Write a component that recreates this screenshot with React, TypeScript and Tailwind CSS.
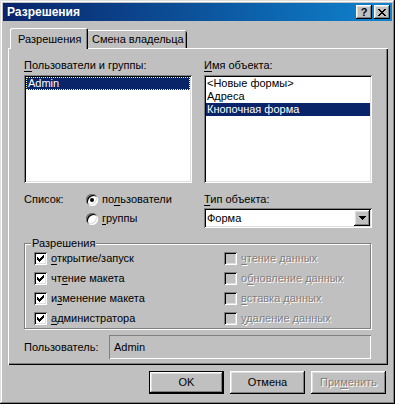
import React from 'react';

const raised =
  'shadow-[inset_-1px_-1px_#000,inset_1px_1px_#fff,inset_-2px_-2px_#808080,inset_2px_2px_#dfdfdf]';
const sunken =
  'shadow-[inset_1px_1px_#808080,inset_-1px_-1px_#fff,inset_2px_2px_#000,inset_-2px_-2px_#dfdfdf]';

const U = ({ children }: { children: React.ReactNode }) => (
  <span className="underline underline-offset-[2px] decoration-1">{children}</span>
);

const Check = ({ checked, disabled }: { checked?: boolean; disabled?: boolean }) => (
  <div
    className={`w-[13px] h-[13px] shrink-0 flex items-center justify-center ${sunken} ${
      disabled ? 'bg-[#c0c0c0]' : 'bg-white'
    }`}
  >
    {checked && (
      <svg width="7" height="7" viewBox="0 0 7 7" shapeRendering="crispEdges" fill="#000">
        <rect x="6" y="0" width="1" height="1" />
        <rect x="5" y="1" width="2" height="1" />
        <rect x="0" y="2" width="1" height="1" />
        <rect x="4" y="2" width="3" height="1" />
        <rect x="0" y="3" width="2" height="1" />
        <rect x="3" y="3" width="3" height="1" />
        <rect x="0" y="4" width="5" height="1" />
        <rect x="1" y="5" width="3" height="1" />
        <rect x="2" y="6" width="1" height="1" />
      </svg>
    )}
  </div>
);

const Radio = ({ checked }: { checked?: boolean }) => (
  <div className="w-[12px] h-[12px] shrink-0 rounded-full bg-white flex items-center justify-center shadow-[inset_1px_1px_#808080,inset_-1px_-1px_#fff,inset_2px_2px_#000,inset_-2px_-2px_#dfdfdf]">
    {checked && <div className="w-[4px] h-[4px] rounded-full bg-black" />}
  </div>
);

const CheckRow = ({
  checked,
  disabled,
  children,
}: {
  checked?: boolean;
  disabled?: boolean;
  children: React.ReactNode;
}) => (
  <div className="h-[20px] flex items-center gap-[4px]">
    <Check checked={checked} disabled={disabled} />
    <span className={disabled ? 'text-[#808080] [text-shadow:1px_1px_#fff]' : ''}>{children}</span>
  </div>
);

const Button = ({
  children,
  isDefault,
  disabled,
}: {
  children: React.ReactNode;
  isDefault?: boolean;
  disabled?: boolean;
}) => (
  <div className={`w-[75px] h-[23px] ${isDefault ? 'border border-black' : ''}`}>
    <div
      className={`w-full h-full flex items-center justify-center bg-[#c0c0c0] ${raised} ${
        disabled ? 'text-[#808080] [text-shadow:1px_1px_#fff]' : ''
      }`}
    >
      {children}
    </div>
  </div>
);

export default function App() {
  return (
    <div className="w-[395px] h-[404px] bg-[#c0c0c0] p-[3px] text-[11px] leading-[13px] text-black font-['Liberation_Sans',Arial,sans-serif] shadow-[inset_-1px_-1px_#000,inset_1px_1px_#dfdfdf,inset_-2px_-2px_#808080,inset_2px_2px_#fff]">
      {/* Title bar */}
      <div className="h-[18px] flex items-center pl-[4px] pr-[2px] bg-gradient-to-r from-[#0a246a] to-[#1084d0]">
        <span className="flex-1 text-white font-bold text-[12px]">Разрешения</span>
        <div className={`w-[16px] h-[14px] bg-[#c0c0c0] flex items-center justify-center font-bold text-[11px] ${raised}`}>
          ?
        </div>
        <div className={`ml-[2px] w-[16px] h-[14px] bg-[#c0c0c0] flex items-center justify-center ${raised}`}>
          <svg width="8" height="7" viewBox="0 0 8 7" shapeRendering="crispEdges">
            <path
              d="M0 0h2v1h1v1h2v-1h1v-1h2v1h-1v1h-1v1h-1v1h1v1h1v1h1v1h-2v-1h-1v-1h-2v1h-1v1h-2v-1h1v-1h1v-1h1v-1h-1v-1h-1v-1h-1z"
              fill="#000"
            />
          </svg>
        </div>
      </div>

      <div className="px-[5px] pt-[7px]">
        {/* Tabs */}
        <div className="flex items-end h-[20px] pl-[2px]">
          <div className="relative z-10 -mb-[1px] w-[78px] h-[21px] bg-[#c0c0c0] rounded-t-[2px] pl-[8px] pt-[5px] shadow-[inset_1px_1px_#fff,inset_-1px_0_#000,inset_-2px_0_#808080]">
            Разрешения
          </div>
          <div className="w-[99px] h-[18px] bg-[#c0c0c0] rounded-tr-[2px] pl-[4px] pt-[3px] shadow-[inset_0_1px_#fff,inset_-1px_0_#000,inset_-2px_0_#808080]">
            Смена владельца
          </div>
        </div>

        {/* Tab panel */}
        <div className="w-[380px] h-[317px] px-[16px] pt-[11px] shadow-[inset_1px_1px_#fff,inset_-1px_-1px_#000,inset_-2px_-2px_#808080]">
          <div className="flex gap-[12px]">
            <div className="w-[168px]">
              <div>
                <U>П</U>ользователи и группы:
              </div>
              <div className={`mt-[3px] h-[108px] bg-white p-[2px] ${sunken}`}>
                <div className="h-[13px] bg-[#0a246a] text-white pl-[2px] outline-1 outline-dotted outline-[#ffff80] -outline-offset-1">
                  Admin
                </div>
              </div>
            </div>
            <div className="w-[168px]">
              <div>
                <U>И</U>мя объекта:
              </div>
              <div className={`mt-[3px] h-[108px] bg-white p-[2px] ${sunken}`}>
                <div className="h-[13px] pl-[1px]">&lt;Новые формы&gt;</div>
                <div className="h-[13px] pl-[1px]">Адреса</div>
                <div className="h-[13px] pl-[1px] bg-[#0a246a] text-white">Кнопочная форма</div>
              </div>
            </div>
          </div>

          <div className="flex gap-[12px] mt-[10px]">
            <div className="w-[168px] flex">
              <div className="w-[62px]">Список:</div>
              <div className="flex flex-col gap-[6px]">
                <div className="flex items-center gap-[4px] h-[13px]">
                  <Radio checked />
                  <span>
                    по<U>л</U>ьзователи
                  </span>
                </div>
                <div className="flex items-center gap-[4px] h-[13px]">
                  <Radio />
                  <span>
                    <U>г</U>руппы
                  </span>
                </div>
              </div>
            </div>
            <div className="w-[168px]">
              <div>
                <U>Т</U>ип объекта:
              </div>
              <div className={`mt-[2px] h-[20px] bg-white p-[2px] flex items-center ${sunken}`}>
                <span className="flex-1 pl-[1px]">Форма</span>
                <div className={`w-[16px] h-[16px] bg-[#c0c0c0] flex items-center justify-center ${raised}`}>
                  <svg width="7" height="4" viewBox="0 0 7 4" shapeRendering="crispEdges">
                    <path d="M0 0h7v1h-1v1h-1v1h-1v1h-1v-1h-1v-1h-1v-1h-1z" fill="#000" />
                  </svg>
                </div>
              </div>
            </div>
          </div>

          {/* Permissions group */}
          <div className="relative mt-[15px] w-[347px] border border-[#808080] shadow-[inset_1px_1px_#fff,1px_1px_#fff] pl-[9px] pt-[4px] flex">
            <div className="absolute -top-[7px] left-[6px] px-[1px] bg-[#c0c0c0]">Разрешения</div>
            <div className="w-[190px]">
              <CheckRow checked>
                <U>о</U>ткрытие/запуск
              </CheckRow>
              <CheckRow checked>
                чт<U>е</U>ние макета
              </CheckRow>
              <CheckRow checked>
                и<U>з</U>менение макета
              </CheckRow>
              <CheckRow checked>
                <U>а</U>дминистратора
              </CheckRow>
            </div>
            <div>
              <CheckRow disabled>
                <U>ч</U>тение данных
              </CheckRow>
              <CheckRow disabled>
                о<U>б</U>новление данных
              </CheckRow>
              <CheckRow disabled>
                <U>в</U>ставка данных
              </CheckRow>
              <CheckRow disabled>
                <U>у</U>даление данных
              </CheckRow>
            </div>
          </div>

          <div className="mt-[6px] flex items-center">
            <div className="w-[85px]">Пользователь:</div>
            <div className="w-[262px] h-[24px] flex items-center pl-[5px] shadow-[inset_1px_1px_#808080,inset_-1px_-1px_#fff]">
              Admin
            </div>
          </div>
        </div>

        {/* Buttons */}
        <div className="mt-[6px] flex justify-end gap-[6px] pr-[1px]">
          <Button isDefault>OK</Button>
          <Button>Отмена</Button>
          <Button disabled>
            При<U>м</U>енить
          </Button>
        </div>
      </div>
    </div>
  );
}
